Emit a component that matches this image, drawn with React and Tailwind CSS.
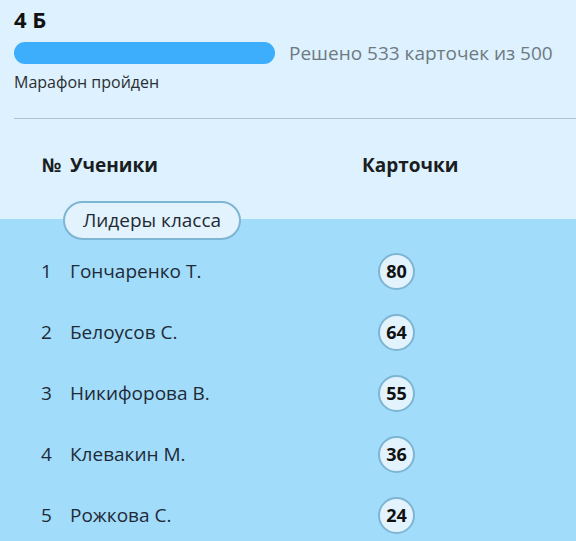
import React from 'react';

const students = [
    { n: 1, name: 'Гончаренко Т.', cards: 80 },
    { n: 2, name: 'Белоусов С.', cards: 64 },
    { n: 3, name: 'Никифорова В.', cards: 55 },
    { n: 4, name: 'Клевакин М.', cards: 36 },
    { n: 5, name: 'Рожкова С.', cards: 24 },
];

const App = () => {
    return (
        <div className="min-h-screen bg-[#a2dcfb] font-['Open_Sans',sans-serif] text-[#1e2a36]">
            <div className="bg-[#ddf1fe] pb-[41px]">
                <div className="px-[14px] pt-[4px]">
                    <div className="text-[22px] font-bold leading-[30px] text-[#111]">4 Б</div>
                    <div className="mt-[7px] flex items-center gap-[14px]">
                        <div className="h-[22px] w-[261px] rounded-full bg-[#3daefb]" />
                        <div className="text-[19px] leading-[24px] text-[#6e7a82]">Решено 533 карточек из 500</div>
                    </div>
                    <div className="mt-[6px] text-[16px] leading-[22px] text-[#2a2f33]">Марафон пройден</div>
                </div>
                <div className="ml-[14px] mt-[25px] border-t border-[#aec3cc]" />
                <div className="mt-[33px] flex text-[19px] font-bold leading-[26px] text-[#1a1d21]">
                    <div className="w-[70px] pl-[42px]">№</div>
                    <div className="w-[292px]">Ученики</div>
                    <div>Карточки</div>
                </div>
            </div>
            <div className="flex px-[63px]">
                <div className="-mt-[18px] flex h-[39px] w-[178px] items-center justify-center rounded-full border-2 border-[#7db5d2] bg-[#e3f3fd] text-[19px] text-[#1e2a36]">
                    Лидеры класса
                </div>
            </div>
            <div className="pt-[1px]">
                {students.map((s) => (
                    <div key={s.n} className="flex h-[61px] items-center text-[19px]">
                        <div className="w-[70px] pl-[41px]">{s.n}</div>
                        <div className="w-[308px]">{s.name}</div>
                        <div className="flex h-[37px] w-[37px] items-center justify-center rounded-full border-2 border-[#7db5d2] bg-[#e3f3fd] text-[18px] font-bold text-[#111]">
                            {s.cards}
                        </div>
                    </div>
                ))}
            </div>
        </div>
    );
};

export default App;
